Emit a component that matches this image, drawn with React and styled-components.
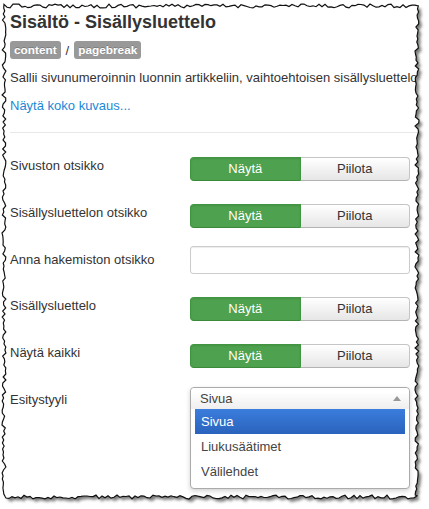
import React from 'react'
import styled, { createGlobalStyle } from 'styled-components'

const Global = createGlobalStyle`
  html, body { margin: 0; padding: 0; background: #fff; overflow: hidden; }
  body { font-family: 'Liberation Sans', Arial, sans-serif; color: #333; }
`

const Sheet = styled.div`
  position: relative;
  width: 429px;
  height: 509px;
  box-sizing: border-box;
  padding: 12px 0 0 10px;
  overflow: hidden;
  background: #fff;
`

const Title = styled.h2`
  margin: 0;
  font-size: 18px;
  line-height: 20px;
  font-weight: bold;
  color: #333;
`

const Tags = styled.div`
  display: flex;
  align-items: center;
  gap: 5px;
  margin-top: 9px;
  font-size: 13px;
`

const Badge = styled.span`
  display: inline-block;
  padding: 2px 4px;
  font-size: 11.8px;
  line-height: 14px;
  font-weight: bold;
  color: #fff;
  background: #999;
  border-radius: 3px;
  text-shadow: 0 -1px 0 rgba(0, 0, 0, 0.2);
`

const Desc = styled.p`
  margin: 10px 0 0;
  font-size: 13px;
  line-height: 18px;
  white-space: nowrap;
`

const MoreLink = styled.a`
  display: block;
  margin-top: 10px;
  font-size: 13px;
  line-height: 18px;
  color: #1a88d8;
  text-decoration: none;
`

const Rule = styled.hr`
  margin: 17px 11px 0 0;
  border: 0;
  border-top: 1px solid #e8e8e8;
`

const Form = styled.div`
  display: flex;
  flex-direction: column;
`

const Row = styled.div`
  display: flex;
  align-items: flex-start;
  margin-top: ${p => p.$gap}px;
`

const Label = styled.label`
  width: 180px;
  padding-top: ${p => p.$pad || 0}px;
  font-size: 13px;
  line-height: 18px;
  color: #333;
`

const Toggle = styled.div`
  display: flex;
  width: 220px;
`

const ToggleBtn = styled.button`
  flex: 1;
  height: 24px;
  padding: 0;
  font-family: inherit;
  font-size: 13px;
  line-height: 18px;
  border: 1px solid ${p => (p.$on ? '#409640' : '#c5c5c5')};
  border-bottom-color: ${p => (p.$on ? '#3a8a3a' : '#b3b3b3')};
  color: ${p => (p.$on ? '#fff' : '#333')};
  background: ${p => (p.$on ? '#4ea14e' : 'linear-gradient(#ffffff, #e6e6e6)')};
  border-radius: ${p => (p.$on ? '4px 0 0 4px' : '0 4px 4px 0')};
  ${p => !p.$on && 'border-left: 0;'}
  box-shadow: ${p => (p.$on ? 'inset 0 1px 2px rgba(0,0,0,0.1)' : 'inset 0 1px 0 rgba(255,255,255,0.2)')};
`

const TextInput = styled.input`
  width: 220px;
  height: 28px;
  box-sizing: border-box;
  border: 1px solid #ccc;
  border-radius: 3px;
  box-shadow: inset 0 1px 1px rgba(0, 0, 0, 0.075);
  font-family: inherit;
  font-size: 13px;
  padding: 4px 6px;
`

const Chosen = styled.div`
  width: 220px;
  box-sizing: border-box;
  border: 1px solid #aaa;
  border-radius: 4px;
  background: #fff;
  box-shadow: 0 2px 5px rgba(0, 0, 0, 0.18);
  font-size: 13px;
  color: #444;
`

const ChosenHead = styled.div`
  display: flex;
  align-items: center;
  justify-content: space-between;
  height: 21px;
  padding: 0 8px 0 9px;
  border-radius: 4px 4px 0 0;
  background: linear-gradient(#ffffff 20%, #eeeeee);
`

const Options = styled.ul`
  list-style: none;
  margin: 0;
  padding: 0 4px 4px;
`

const Option = styled.li`
  height: 25px;
  line-height: 25px;
  padding: 0 6px;
  color: ${p => (p.$active ? '#fff' : '#444')};
  background: ${p => (p.$active ? 'linear-gradient(#3b7ddc, #2a63bd)' : 'transparent')};
`

const Edge = styled.svg`
  position: absolute;
  left: 0;
  top: 0;
  pointer-events: none;
`

// jagged outline for the torn paper frame
function tornOutline() {
  let seed = 12345
  const rnd = () => {
    seed = (seed * 16807) % 2147483647
    return seed / 2147483647
  }
  const pts = []
  const L = 4, T = 6, R = 417, B = 497
  for (let x = L; x < R; x += 3) pts.push([x, T + (rnd() - 0.5) * 4])
  for (let y = T; y < B; y += 3) pts.push([R + (rnd() - 0.5) * 4, y])
  for (let x = R; x > L; x -= 3) pts.push([x, B + (rnd() - 0.5) * 4])
  for (let y = B; y > T; y -= 3) pts.push([L + (rnd() - 0.5) * 4, y])
  return 'M' + pts.map(([x, y]) => `${x.toFixed(1)} ${y.toFixed(1)}`).join(' L') + ' Z'
}

function TornEdge() {
  const d = tornOutline()
  const outer = 'M0 0 H429 V509 H0 Z '
  return (
    <Edge width="429" height="509" viewBox="0 0 429 509">
      <defs>
        <filter id="soft" x="-5%" y="-5%" width="110%" height="110%">
          <feGaussianBlur stdDeviation="1.6" />
        </filter>
        <clipPath id="outside">
          <path d={outer + d} clipRule="evenodd" />
        </clipPath>
      </defs>
      <path d={outer + d} fill="#fff" fillRule="evenodd" />
      <g clipPath="url(#outside)">
        <path d={d} transform="translate(3 3)" fill="#7a7a7a" filter="url(#soft)" />
      </g>
      <path d={d} fill="none" stroke="#111" strokeWidth="1.2" />
    </Edge>
  )
}

function YesNo() {
  return (
    <Toggle>
      <ToggleBtn $on>Näytä</ToggleBtn>
      <ToggleBtn>Piilota</ToggleBtn>
    </Toggle>
  )
}

export default function App() {
  return (
    <>
      <Global />
      <Sheet>
        <Title>Sisältö - Sisällysluettelo</Title>
        <Tags>
          <Badge>content</Badge>
          <span>/</span>
          <Badge>pagebreak</Badge>
        </Tags>
        <Desc>Sallii sivunumeroinnin luonnin artikkeliin, vaihtoehtoisen sisällysluettelo</Desc>
        <MoreLink href="#">Näytä koko kuvaus...</MoreLink>
        <Rule />
        <Form>
          <Row $gap={24}>
            <Label>Sivuston otsikko</Label>
            <YesNo />
          </Row>
          <Row $gap={23}>
            <Label>Sisällysluettelon otsikko</Label>
            <YesNo />
          </Row>
          <Row $gap={18}>
            <Label $pad={5}>Anna hakemiston otsikko</Label>
            <TextInput type="text" />
          </Row>
          <Row $gap={23}>
            <Label>Sisällysluettelo</Label>
            <YesNo />
          </Row>
          <Row $gap={23}>
            <Label>Näytä kaikki</Label>
            <YesNo />
          </Row>
          <Row $gap={19}>
            <Label $pad={4}>Esitystyyli</Label>
            <Chosen>
              <ChosenHead>
                <span>Sivua</span>
                <svg width="8" height="5" viewBox="0 0 8 5">
                  <path d="M0 5 L4 0 L8 5 Z" fill="#999" />
                </svg>
              </ChosenHead>
              <Options>
                <Option $active>Sivua</Option>
                <Option>Liukusäätimet</Option>
                <Option>Välilehdet</Option>
              </Options>
            </Chosen>
          </Row>
        </Form>
        <TornEdge />
      </Sheet>
    </>
  )
}
